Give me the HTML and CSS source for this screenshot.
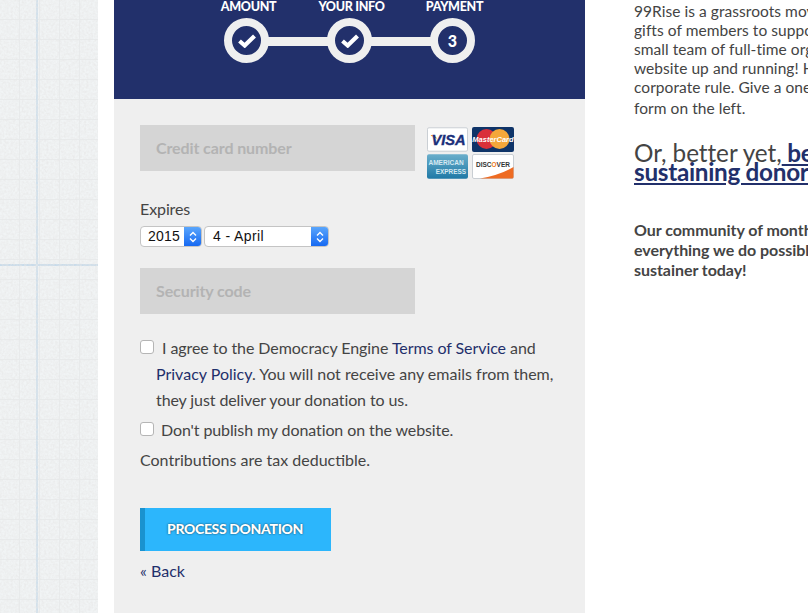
FILE: index.html
```html
<!DOCTYPE html>
<html lang="en">
<head>
<meta charset="utf-8">
<title>Donate</title>
<link rel="stylesheet" href="styles.css">
</head>
<body>
<svg class="paper-noise" aria-hidden="true"><filter id="grain"><feTurbulence type="fractalNoise" baseFrequency="0.45" numOctaves="2" seed="7"/><feColorMatrix values="0 0 0 0 0.80  0 0 0 0 0.80  0 0 0 0 0.80  0.9 0.9 0 0 -0.62"/></filter><rect width="98" height="613" filter="url(#grain)"/></svg>
<div class="page">
  <main class="panel">
    <header class="steps">
      <ol class="step-list">
        <li class="step"><span class="step-label">AMOUNT</span><span class="step-dot"><svg class="check" viewBox="0 0 18 14"><path d="M1.500 7 L6.700 11.500 L16.500 2" fill="none" stroke="#fff" stroke-width="4.200"/></svg></span></li>
        <li class="step"><span class="step-label">YOUR INFO</span><span class="step-dot"><svg class="check" viewBox="0 0 18 14"><path d="M1.500 7 L6.700 11.500 L16.500 2" fill="none" stroke="#fff" stroke-width="4.200"/></svg></span></li>
        <li class="step"><span class="step-label">PAYMENT</span><span class="step-dot"><span class="step-num">3</span></span></li>
      </ol>
    </header>
    <form class="form">
      <div class="card-row">
        <div class="field">Credit card number</div>
        <div class="cards">
          <svg class="card" viewBox="0 0 42 25"><rect x=".5" y=".5" width="41" height="24" rx="1.500" fill="#fff" stroke="#c9ced3"/><path d="M4 8 Q9 8 11 13 Q9 10 4 9Z" fill="#f0a51e"/><text x="22" y="18" text-anchor="middle" class="visa">VISA</text></svg>
          <svg class="card" viewBox="0 0 42 25"><rect width="42" height="25" rx="2" fill="#0f3468"/><circle cx="14.500" cy="12" r="10" fill="#d9303a"/><circle cx="27.500" cy="12" r="10" fill="#f4a73a"/><text x="21" y="14.500" text-anchor="middle" class="mc">MasterCard</text></svg>
          <svg class="card" viewBox="0 0 42 25"><defs><linearGradient id="amex" x1="0" y1="0" x2="0" y2="1"><stop offset="0" stop-color="#6aaecb"/><stop offset="1" stop-color="#1f79a6"/></linearGradient></defs><rect width="42" height="25" rx="2" fill="url(#amex)"/><text x="1.500" y="10.500" textLength="36" lengthAdjust="spacingAndGlyphs" class="amex">AMERICAN</text><text x="9" y="20" textLength="31" lengthAdjust="spacingAndGlyphs" class="amex">EXPRESS</text></svg>
          <svg class="card" viewBox="0 0 42 25"><rect x=".5" y=".5" width="41" height="24" rx="1.500" fill="#fff" stroke="#c9ced3"/><path d="M8 24.500 Q28 21 41.500 13 V23 Q41.500 24.500 40 24.500Z" fill="#ee6b22"/><text x="4" y="12.500" textLength="34" lengthAdjust="spacingAndGlyphs" class="disc">DISC<tspan class="disc-o">O</tspan>VER</text></svg>
        </div>
      </div>
      <div class="expires-label">Expires</div>
      <div class="selects">
        <div class="select select-year"><span class="select-value">2015</span><span class="select-arrow"><svg class="arrows" viewBox="0 0 8 12"><path d="M1 4.500 L4 1.500 L7 4.500 M1 7.500 L4 10.500 L7 7.500" fill="none" stroke="#fff" stroke-width="1.400"/></svg></span></div>
        <div class="select select-month"><span class="select-value">4 - April</span><span class="select-arrow"><svg class="arrows" viewBox="0 0 8 12"><path d="M1 4.500 L4 1.500 L7 4.500 M1 7.500 L4 10.500 L7 7.500" fill="none" stroke="#fff" stroke-width="1.400"/></svg></span></div>
      </div>
      <div class="field field-security">Security code</div>
      <div class="agree">
        <span class="box"></span><p class="agree-text"><span class="first">I agree to the Democracy Engine <a class="link" href="#">Terms of Service</a> and</span><br><a class="link" href="#">Privacy Policy</a>. You will not receive any emails from them,<br><span class="tight">they just deliver your donation to us.</span></p>
      </div>
      <div class="publish"><span class="box"></span><span class="tight">Don't publish my donation on the website.</span></div>
      <p class="tax">Contributions are tax deductible.</p>
      <div class="button">PROCESS DONATION</div>
      <a class="link back" href="#">« Back</a>
    </form>
  </main>
  <aside class="side">
    <p class="intro">99Rise is a grassroots movement funded by the small<br>gifts of members to support our work. We have a<br>small team of full-time organizers and keep this<br>website up and running! Help us end big money and<br>corporate rule. Give a one-time gift using the<br><span class="last">form on the left.</span></p>
    <h2 class="better">Or, better yet,<a class="better-link" href="#"> become a<br>sustaining donor</a></h2>
    <p class="community">Our community of monthly sustainers makes<br>everything we do possible. Become a<br>sustainer today!</p>
  </aside>
</div>
</body>
</html>
```
FILE: styles.css
```css
* { box-sizing: border-box; }
html, body { margin: 0; padding: 0; height: 100%; overflow: hidden; }
body {
  font-family: "Lato", sans-serif;
  color: #444;
  font-size: 16px;
  background-color: #f1f4f5;
  background-image:
    linear-gradient(90deg, transparent 36px, #d0e0ec 36px, #d0e0ec 38px, transparent 38px),
    linear-gradient(180deg, transparent 264px, #c8dbea 264px, #c8dbea 266px, transparent 266px),
    repeating-linear-gradient(90deg, transparent 0, transparent 19px, #e8ebec 19px, #e8ebec 20px),
    repeating-linear-gradient(180deg, transparent 0, transparent 19px, #e8ebec 19px, #e8ebec 20px);
}
.paper-noise { position: absolute; left: 0; top: 0; width: 98px; height: 613px; }
.page {
  position: relative;
  margin-left: 98px;
  height: 613px;
  background: #fff;
  padding-left: 16px;
  display: flex;
  width: 710px;
  overflow: hidden;
}
.panel { width: 471px; flex: none; height: 613px; background: #efefef; }
.steps { height: 99px; background: #22306b; padding-left: 110px; }
.step-list { list-style: none; margin: 0; padding: 0; display: flex; }
.step { width: 103px; display: flex; flex-direction: column; align-items: flex-start; position: relative; }
.step:not(:last-child)::after { content: ""; position: absolute; left: 40px; top: 37px; width: 66px; height: 9px; background: #efefef; }
.step-label { height: 18px; width: 45px; display: flex; justify-content: center; white-space: nowrap; font-weight: 900; font-size: 12.500px; letter-spacing: -0.3px; line-height: 13px; color: #fff; position: relative; left: 2px; }
.step-dot { width: 45px; height: 45px; border: 8px solid #efefef; border-radius: 50%; background: #22306b; display: flex; align-items: center; justify-content: center; position: relative; z-index: 1; }
.check { width: 18px; height: 14px; }
.step-num { color: #fff; font-weight: 900; font-size: 16px; line-height: 1; }
.form { padding: 26px 0 0 26px; }
.card-row { display: flex; gap: 12px; }
.field { width: 275px; height: 46px; background: #d5d5d5; color: #b3b3b3; font-weight: 700; font-size: 16px; letter-spacing: -0.1px; line-height: 46px; padding-left: 16px; }
.cards { display: grid; grid-template-columns: 41px 42px; grid-auto-rows: 25px; gap: 2px 4px; padding-top: 2px; }
.card { display: block; width: 100%; height: 25px; }
.visa { font: italic 700 15px "Liberation Sans", sans-serif; fill: #1a2f7a; stroke: #1a2f7a; stroke-width: .4px; }
.mc { font: italic 700 7.500px "Liberation Sans", sans-serif; fill: #fff; }
.amex { font: 700 7px "Liberation Sans", sans-serif; fill: #d5e9f2; }
.disc { font: 700 7.500px "Liberation Sans", sans-serif; fill: #333; }
.disc-o { fill: #ee7a22; }
.expires-label { margin-top: 20px; line-height: 20px; letter-spacing: -0.1px; }
.selects { display: flex; gap: 2px; margin-top: 7px; }
.select { height: 21px; background: #fff; border: 1px solid #c4c4c4; border-radius: 4px; display: flex; justify-content: space-between; font: 14px "Liberation Sans", sans-serif; color: #111; line-height: 19px; overflow: hidden; }
.select-year { width: 62px; }
.select-month { width: 125px; }
.select-value { padding-left: 7px; letter-spacing: .2px; }
.select-month .select-value { padding-left: 8px; letter-spacing: .4px; }
.select-arrow { width: 17px; background: linear-gradient(#5aa6fc, #1669f2); display: flex; align-items: center; justify-content: center; }
.arrows { width: 8px; height: 12px; }
.field-security { margin-top: 21px; }
.agree { position: relative; margin-top: 21px; padding-left: 16px; line-height: 26px; }
.agree-text { margin: 0; white-space: nowrap; }
.first { padding-left: 6px; letter-spacing: -0.07px; }
.tight { letter-spacing: -0.1px; }
.box { width: 14px; height: 14px; background: #fff; border: 1px solid #b5b5b5; border-radius: 3px; flex: none; }
.agree .box { position: absolute; left: 0; top: 5px; }
.publish { display: flex; gap: 7px; line-height: 26px; margin-top: 4px; align-items: flex-start; }
.publish .box { margin-top: 5px; }
.tax { margin: 4px 0 0; line-height: 26px; }
.link { color: #1f2f6b; text-decoration: none; }
.button { margin-top: 35px; width: 191px; height: 43px; background: #2cb6fc; border-left: 5px solid #1a92cf; color: #fff; font-weight: 900; font-size: 14px; letter-spacing: -0.35px; line-height: 42px; padding-left: 22px; text-shadow: 0 0 2px rgba(0,0,0,.7); }
.back { display: block; margin-top: 9px; line-height: 22px; }
.side { margin-left: 49px; flex: none; width: 400px; white-space: nowrap; }
.intro { margin: 2px 0 0; line-height: 19px; font-size: 15.500px; letter-spacing: .05px; }
.last { display: inline-block; margin-top: 2px; }
.better { margin: 25px 0 0; font-weight: 400; font-size: 24.300px; line-height: 19px; letter-spacing: -0.05px; }
.better-link { font-weight: 700; color: #22306b; text-decoration: underline; letter-spacing: -0.3px; }
.community { margin: 39px 0 0; font-weight: 700; line-height: 20px; letter-spacing: -0.05px; }
```
